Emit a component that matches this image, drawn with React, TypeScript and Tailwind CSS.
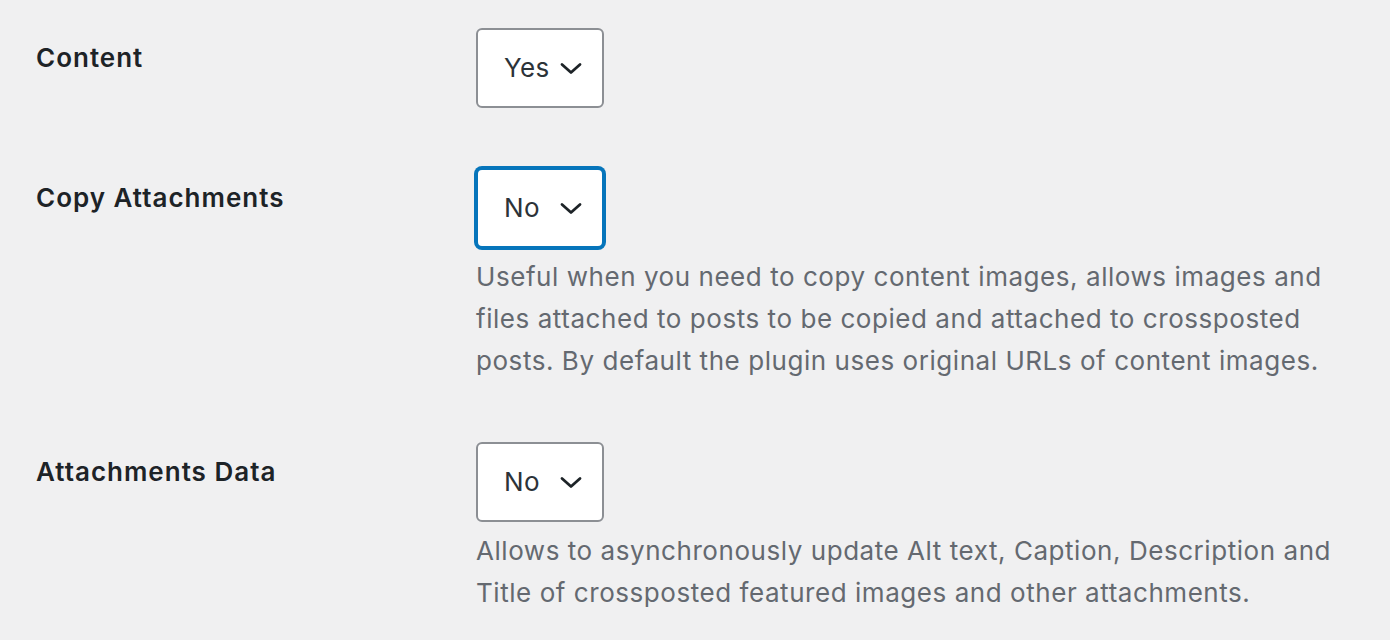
import React from "react";

type Row = {
  label: string;
  value: string;
  focused?: boolean;
  description?: string;
};

const rows: Row[] = [
  { label: "Content", value: "Yes" },
  {
    label: "Copy Attachments",
    value: "No",
    focused: true,
    description:
      "Useful when you need to copy content images, allows images and files attached to posts to be copied and attached to crossposted posts. By default the plugin uses original URLs of content images.",
  },
  {
    label: "Attachments Data",
    value: "No",
    description:
      "Allows to asynchronously update Alt text, Caption, Description and Title of crossposted featured images and other attachments.",
  },
];

function Chevron() {
  return (
    <svg width="22" height="13" viewBox="0 0 22 13" fill="none" className="shrink-0">
      <path d="M2 2.5 L11 10.5 L20 2.5" stroke="#1d2327" strokeWidth="2.8" strokeLinecap="round" strokeLinejoin="round" />
    </svg>
  );
}

function SelectBox({ value, focused }: { value: string; focused?: boolean }) {
  return (
    <div
      className={
        focused
          ? "flex h-[80px] w-[128px] items-center justify-between rounded-[6px] border-2 border-[#0675bb] bg-white pl-[26px] pr-[20px] shadow-[0_0_0_2px_#0675bb]"
          : "flex h-[80px] w-[128px] items-center justify-between rounded-[6px] border-2 border-[#8c8f94] bg-white pl-[26px] pr-[20px]"
      }
    >
      <span className="text-[26px] leading-none tracking-[0.3px] text-[#2c3338]">{value}</span>
      <Chevron />
    </div>
  );
}

export default function App() {
  return (
    <div className="min-h-[640px] w-full bg-[#f0f0f1] px-[36px] font-['Inter','Liberation_Sans',sans-serif]">
      {rows.map((row) => (
        <div key={row.label} className="flex">
          <div className="w-[420px] shrink-0 pr-[20px] pt-[40px] pb-[40px]">
            <span className="block text-[26px] font-semibold leading-[36px] tracking-[1px] text-[#1d2327]">{row.label}</span>
          </div>
          <div className="w-[880px] pl-[20px] pt-[28px] pb-[32px]">
            <SelectBox value={row.value} focused={row.focused} />
            {row.description && (
              <p className="mt-[8px] text-[26px] leading-[42px] tracking-[0.55px] text-[#646970]">{row.description}</p>
            )}
          </div>
        </div>
      ))}
    </div>
  );
}
